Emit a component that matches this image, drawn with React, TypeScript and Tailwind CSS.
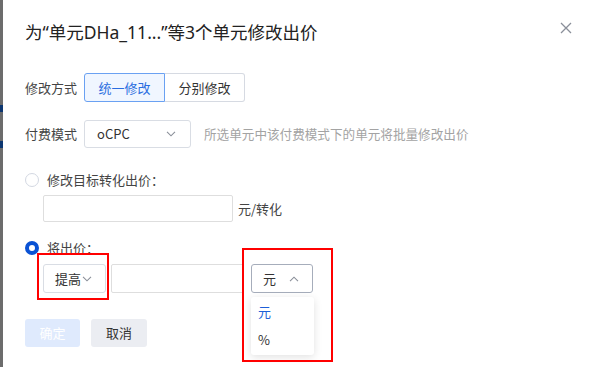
import React from "react";

const Chevron = ({ up = false, className = "" }: { up?: boolean; className?: string }) => (
  <svg width="10" height="6" viewBox="0 0 10 6" className={className}>
    <path
      d={up ? "M1 5.2 L5 1.2 L9 5.2" : "M1 0.8 L5 4.8 L9 0.8"}
      fill="none"
      stroke="#8a8f99"
      strokeWidth="1.1"
    />
  </svg>
);

export default function App() {
  return (
    <div
      className="relative flex w-[592px] h-[367px] overflow-hidden bg-white"
      style={{ fontFamily: '"Noto Sans CJK SC", "Noto Sans", sans-serif' }}
    >
      {/* backdrop strip */}
      <div className="w-[3px] h-full bg-[#6c6c6c] flex flex-col shrink-0">
        <div className="h-[105px]" />
        <div className="h-[7px] bg-[#0c3670]" />
        <div className="h-[29px]" />
        <div className="h-[7px] bg-[#0c3670]" />
      </div>

      {/* modal */}
      <div className="flex-1 pl-[22px] pt-[19px] text-[13px] text-[#444]">
        <div className="flex items-center justify-between pr-[20px]">
          <div
            className="text-[17.5px] leading-[26px] text-[#222]"
            style={{ fontFamily: '"Noto Sans", "Noto Sans CJK SC", sans-serif' }}
          >
            为“单元DHa_11...”等3个单元修改出价
          </div>
          <svg width="12" height="12" viewBox="0 0 12 12" className="mt-[-8px]">
            <path d="M1 1 L11 11 M11 1 L1 11" stroke="#8a8f99" strokeWidth="1.3" />
          </svg>
        </div>

        {/* row 1 */}
        <div className="mt-[28px] flex items-center h-[29px]">
          <span className="w-[59px]">修改方式</span>
          <div className="flex h-[29px]">
            <div className="w-[81px] flex items-center justify-center border border-[#6aa1f2] bg-[#f0f6ff] text-[#2a6de0] rounded-l-[3px]">
              统一修改
            </div>
            <div className="w-[80px] flex items-center justify-center border border-l-0 border-[#d6dae2] text-[#333] rounded-r-[3px]">
              分别修改
            </div>
          </div>
        </div>

        {/* row 2 */}
        <div className="mt-[18px] flex items-center h-[28px]">
          <span className="w-[59px]">付费模式</span>
          <div className="w-[107px] h-[28px] flex items-center justify-between pl-[12px] pr-[14px] border border-[#d9dde4] rounded-[3px] text-[#333]">
            <span>oCPC</span>
            <Chevron />
          </div>
          <span className="ml-[13px] text-[12.6px] text-[#a3a3a3]">所选单元中该付费模式下的单元将批量修改出价</span>
        </div>

        {/* radio 1 */}
        <div className="mt-[22px] flex items-center h-[20px]">
          <div className="w-[14px] h-[14px] rounded-full border border-[#d3d8e2] bg-white" />
          <span className="ml-[8px]">修改目标转化出价：</span>
        </div>
        <div className="mt-[5px] flex items-center pl-[18px]">
          <div className="w-[190px] h-[27px] border border-[#dedede] rounded-[2px]" />
          <span className="ml-[5px]">元/转化</span>
        </div>

        {/* radio 2 */}
        <div className="mt-[16px] flex items-center h-[20px]">
          <div className="w-[14px] h-[14px] rounded-full border-[4px] border-[#0a52d4] bg-white" />
          <span className="ml-[8px]">将出价：</span>
        </div>
        <div className="mt-[6px] flex items-center pl-[18px] h-[29px]">
          <div className="w-[63px] h-[29px] flex items-center pl-[11px] border border-[#d9dde4] rounded-[3px] text-[#333]">
            <span>提高</span>
            <Chevron className="ml-[1px] mt-[1px]" />
          </div>
          <div className="ml-[5px] w-[133px] h-[29px] border border-[#dedede] rounded-[2px]" />
          <div className="relative ml-[7px]">
            <div className="w-[62px] h-[29px] flex items-center justify-between pl-[11px] pr-[13px] border border-[#a6adbb] rounded-[3px] text-[#333]">
              <span>元</span>
              <Chevron up />
            </div>
            <div className="absolute left-0 top-[33px] w-[63px] h-[58px] bg-white rounded-[3px] shadow-[0_2px_8px_rgba(0,0,0,0.12)] flex flex-col pl-[7px] pt-[2px]">
              <div className="h-[26px] flex items-center text-[#1d5fd8]">元</div>
              <div className="h-[26px] flex items-center text-[#333] mt-[2px]">%</div>
            </div>
          </div>
        </div>

        {/* buttons */}
        <div className="mt-[26px] flex">
          <div className="w-[55px] h-[28px] flex items-center justify-center bg-[#dfeafd] text-white rounded-[3px]">
            确定
          </div>
          <div className="ml-[11px] w-[56px] h-[28px] flex items-center justify-center bg-[#ebedf2] text-[#333] rounded-[3px]">
            取消
          </div>
        </div>
      </div>

      {/* annotation boxes */}
      <div className="absolute left-[37px] top-[253px] w-[72px] h-[47px] border-2 border-[#f00] pointer-events-none" />
      <div className="absolute left-[242px] top-[248px] w-[91px] h-[114px] border-2 border-[#f00] pointer-events-none" />
    </div>
  );
}
